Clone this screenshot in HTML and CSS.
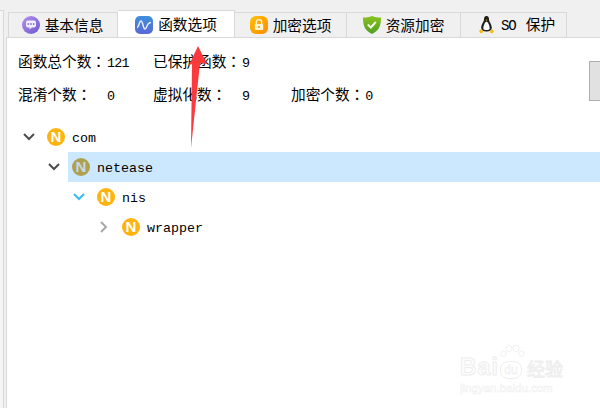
FILE: index.html
```html
<!DOCTYPE html>
<html>
    <head>
        <title>函数选项</title>
        <link rel="stylesheet" href="styles.css">
    </head>
    <body>
        <div class="side"></div>
        <div class="frame">
            <div class="tabs">
                <div class="tab">
                    <svg class="tabicon" viewBox="0 0 18 18">
                        <defs><linearGradient id="pu" x1="0" y1="0" x2="1" y2="1"><stop offset="0" stop-color="#b493ec"/><stop offset="1" stop-color="#6c55cf"/></linearGradient></defs>
                        <circle cx="9" cy="9" r="9" fill="url(#pu)"/>
                        <path d="M4 6.500q0-2 2-2h6q2 0 2 2v3q0 2-2 2h-2l-2.500 2v-2h-1.500q-2 0-2-2z" fill="#f3eefd"/>
                        <circle cx="6.300" cy="8" r=".9" fill="#8a6fdc"/><circle cx="9" cy="8" r=".9" fill="#8a6fdc"/><circle cx="11.700" cy="8" r=".9" fill="#8a6fdc"/>
                    </svg>
                    <span>基本信息</span>
                </div>
                <div class="tab active">
                    <svg class="tabicon" viewBox="0 0 18 18">
                        <defs><linearGradient id="bl" x1="0" y1="0" x2="0" y2="1"><stop offset="0" stop-color="#3f8fdc"/><stop offset="1" stop-color="#5a68d6"/></linearGradient></defs>
                        <rect width="18" height="18" rx="5" fill="url(#bl)"/>
                        <path d="M2 11.500c2 0 2-6.500 4-6.500s2 8 4 8 1.500-6.500 6-6.500" fill="none" stroke="#e8f1fb" stroke-width="1.400"/>
                    </svg>
                    <span>函数选项</span>
                </div>
                <div class="tab">
                    <svg class="tabicon" viewBox="0 0 18 18">
                        <defs><linearGradient id="or" x1="0" y1="0" x2="1" y2="1"><stop offset="0" stop-color="#ffc107"/><stop offset="1" stop-color="#fb8c00"/></linearGradient></defs>
                        <rect width="18" height="18" rx="6" fill="url(#or)"/>
                        <path d="M6.300 8V6.300a2.700 2.700 0 0 1 5.400 0V8" fill="none" stroke="#fff3d6" stroke-width="1.400"/>
                        <rect x="4.800" y="8" width="8.400" height="6" rx="1" fill="#fff3d6"/>
                        <circle cx="9" cy="11" r="1.100" fill="#f59c00"/>
                    </svg>
                    <span>加密选项</span>
                </div>
                <div class="tab">
                    <svg class="tabicon" viewBox="0 0 18 18">
                        <defs><linearGradient id="gr" x1="0" y1="0" x2="0" y2="1"><stop offset="0" stop-color="#8cc21f"/><stop offset="1" stop-color="#4e9e22"/></linearGradient></defs>
                        <path d="M9 0c3 1.300 5.500 1.600 9 1.600 0 8-1.500 13-9 16.400-7.500-3.400-9-8.400-9-16.400 3.500 0 6-.3 9-1.600z" fill="url(#gr)"/>
                        <path d="M4.800 8.500l3 3 5-5.500" fill="none" stroke="#f4fbe6" stroke-width="2"/>
                    </svg>
                    <span>资源加密</span>
                </div>
                <div class="tab penguin">
                    <svg class="tabicon" viewBox="0 0 15 18">
                        <path d="M7.500 0c2 0 2.500 1.600 2.500 3.500 0 2.300 2.800 4.500 2.800 8.500 0 2-2 3.500-5.300 3.500s-5.300-1.500-5.300-3.500c0-4 2.800-6.200 2.800-8.500 0-1.900.5-3.500 2.500-3.500z" fill="#1c1c1c"/>
                        <path d="M7.500 5.500c-1.800 1-3.200 4-3.200 7 0 2 6.400 2 6.400 0 0-3-1.400-6-3.200-7z" fill="#fff"/>
                        <path d="M6.400 3.800h2.200l-1.100 1.300z" fill="#f5b915"/>
                        <path d="M0 15l2.600-2.500 1.700 3.800-2.600 1.200zM15 15l-2.600-2.500-1.700 3.800 2.600 1.200z" fill="#f5b915"/>
                    </svg>
                    <span><span class="num">SO </span><span class="so-text">保护</span></span>
                </div>
            </div>
            <div class="panel">
                <div class="stats">
                    <div>函数总个数<span class="colon">：</span><span class="num">121</span></div>
                    <div>已保护函数<span class="colon">：</span><span class="num">9</span></div>
                    <div></div>
                    <div>混淆个数<span class="colon">：</span><span class="num">  0</span></div>
                    <div>虚拟化数<span class="colon">：</span><span class="num">  9</span></div>
                    <div>加密个数<span class="colon">：</span><span class="num">0</span></div>
                </div>
                <div class="tree">
                    <div class="row depth0">
                        <svg class="chev" viewBox="0 0 14 14"><path d="M2 4l5 5 5-5" /></svg>
                        <div class="node"><span class="badge">N</span><span class="label">com</span></div>
                    </div>
                    <div class="row depth1">
                        <svg class="chev" viewBox="0 0 14 14"><path d="M2 4l5 5 5-5" /></svg>
                        <div class="node selected"><span class="badge">N</span><span class="label">netease</span></div>
                    </div>
                    <div class="row depth2">
                        <svg class="chev open" viewBox="0 0 14 14"><path d="M2 4l5 5 5-5" /></svg>
                        <div class="node"><span class="badge">N</span><span class="label">nis</span></div>
                    </div>
                    <div class="row depth3">
                        <svg class="chev closed" viewBox="0 0 14 14"><path d="M4 2l5 5-5 5" /></svg>
                        <div class="node"><span class="badge">N</span><span class="label">wrapper</span></div>
                    </div>
                </div>
                <div class="thumb"></div>
            </div>
        </div>
        <svg class="arrow" viewBox="0 0 600 408">
            <polygon points="198,46 207,64 200,63 191,148 192,64 189,65" />
        </svg>
        <div class="mark">
            <div class="mark-top">
                <span class="mark-bai">Bai</span>
                <span class="mark-paw">
                    <svg class="paw" viewBox="0 0 30 18">
                        <circle cx="6" cy="11" r="3"/><circle cx="12" cy="5" r="3.500"/><circle cx="20" cy="5" r="3.500"/><circle cx="26" cy="11" r="3"/>
                    </svg>
                    <span class="mark-du">du</span>
                </span>
                <span class="mark-jy">经验</span>
            </div>
            <div class="mark-url">jingyan.baidu.com</div>
        </div>
    </body>
</html>
```

FILE: styles.css
```css
html, body {
    height: 100%;
}
body {
    margin: 0;
    background: #f0f0f0;
    font-family: "Noto Sans CJK SC", sans-serif;
    font-size: 14.67px;
    color: #000;
    overflow: hidden;
    display: flex;
}
.side {
    width: 3px;
    margin-top: 10px;
    background: #f5f5f5;
    border-top: 1px solid #d9d9d9;
    border-right: 1px solid #d9d9d9;
    flex: none;
}
.frame {
    flex: 1;
    height: 398px;
    padding: 10px 0 0 2px;
    display: flex;
    flex-direction: column;
}
.tabs {
    display: flex;
    align-items: flex-end;
    height: 27px;
    padding-left: 2px;
}
.tab {
    height: 25px;
    box-sizing: border-box;
    border: 1px solid #d9d9d9;
    border-bottom: none;
    border-left: none;
    display: flex;
    align-items: center;
    justify-content: center;
    gap: 5px;
    width: 112px;
    white-space: pre;
    line-height: 1;
}
.tab:first-child {
    border-left: 1px solid #d9d9d9;
    width: 110px;
    padding-right: 1px;
}
.tab.active {
    height: 28px;
    width: 117px;
    background: #fff;
    margin-bottom: -1px;
    position: relative;
}
.tab:nth-child(4) {
    width: 114px;
}
.tab.penguin {
    width: 106px;
    padding-left: 7px;
    gap: 7px;
}
.penguin .tabicon {
    width: 15px;
}
.penguin .num {
    font-size: 14px;
    letter-spacing: -1.100px;
}
.so-text {
    margin-left: 3px;
}
.tabicon {
    width: 18px;
    height: 18px;
    flex: none;
}
.num {
    font-family: "Liberation Mono", monospace;
    font-size: 13.4px;
    letter-spacing: -.72px;
}
.stats .num {
    margin-left: 1px;
}
.colon {
    font-family: "Noto Sans CJK TC", sans-serif;
}
.panel {
    flex: 1;
    background: #fff;
    border-top: 1px solid #d9d9d9;
    border-left: 1px solid #d9d9d9;
    position: relative;
}
.stats {
    display: grid;
    grid-template-columns: 135px 138px auto;
    grid-auto-rows: 33px;
    padding: 6px 0 0 11px;
    line-height: 33px;
    white-space: pre;
}
.tree {
    margin-top: 12px;
    font-family: "Liberation Mono", monospace;
    font-size: 13.33px;
}
.row {
    display: flex;
    align-items: center;
    height: 30px;
}
.depth0 {
    padding-left: 11px;
}
.depth1 {
    padding-left: 36px;
}
.depth2 {
    padding-left: 61px;
}
.depth3 {
    padding-left: 86px;
}
.chev {
    width: 22px;
    height: 14px;
    margin-right: 3px;
    flex: none;
    fill: none;
    stroke: #4d4d4d;
    stroke-width: 2;
}
.chev.open {
    stroke: #33bdf2;
}
.chev.closed {
    stroke: #a8a8a8;
}
.node {
    flex: 1;
    height: 100%;
    display: flex;
    align-items: center;
    gap: 7px;
    padding-left: 4px;
}
.label {
    padding-top: 2px;
}
.node.selected {
    background: #cce8ff;
}
.badge {
    width: 18px;
    height: 18px;
    border-radius: 50%;
    background: #ffb30f;
    color: #fff;
    font-family: "Liberation Sans", sans-serif;
    font-size: 15px;
    font-weight: bold;
    line-height: 18px;
    text-align: center;
}
.selected .badge {
    background: #b0a14f;
    color: #c6d9ea;
}
.thumb {
    position: absolute;
    top: 23px;
    right: 0;
    width: 10px;
    height: 38px;
    background: #e1e1e1;
    border: 1px solid #adadad;
    border-right: none;
}
.arrow {
    position: absolute;
    left: 0;
    top: 0;
    width: 600px;
    height: 408px;
    fill: #fb3a3d;
}
.mark {
    position: absolute;
    left: 460px;
    top: 343px;
    width: 110px;
    color: #fdfdfd;
    -webkit-text-stroke: 1px #eeeeee;
    font-family: "Liberation Sans", sans-serif;
}
.mark-top {
    display: flex;
    align-items: flex-end;
    height: 36px;
}
.mark-bai {
    width: 35px;
    font-size: 23px;
    font-weight: bold;
    letter-spacing: 1px;
    line-height: 24px;
}
.mark-paw {
    width: 32px;
    height: 36px;
    display: flex;
    flex-direction: column;
    align-items: center;
}
.paw {
    width: 27px;
    height: 18px;
    fill: none;
    stroke: #eeeeee;
    flex: none;
}
.mark-du {
    font-size: 12px;
    line-height: 16px;
    border: 1px solid #eeeeee;
    border-radius: 8px;
    padding: 0 3px;
    -webkit-text-stroke: .5px #eeeeee;
}
.mark-jy {
    font-family: "Noto Sans CJK SC", sans-serif;
    font-size: 18px;
    line-height: 22px;
}
.mark-url {
    font-size: 11.500px;
    line-height: 14px;
    margin-top: 2px;
    -webkit-text-stroke: .4px #eeeeee;
}
```
